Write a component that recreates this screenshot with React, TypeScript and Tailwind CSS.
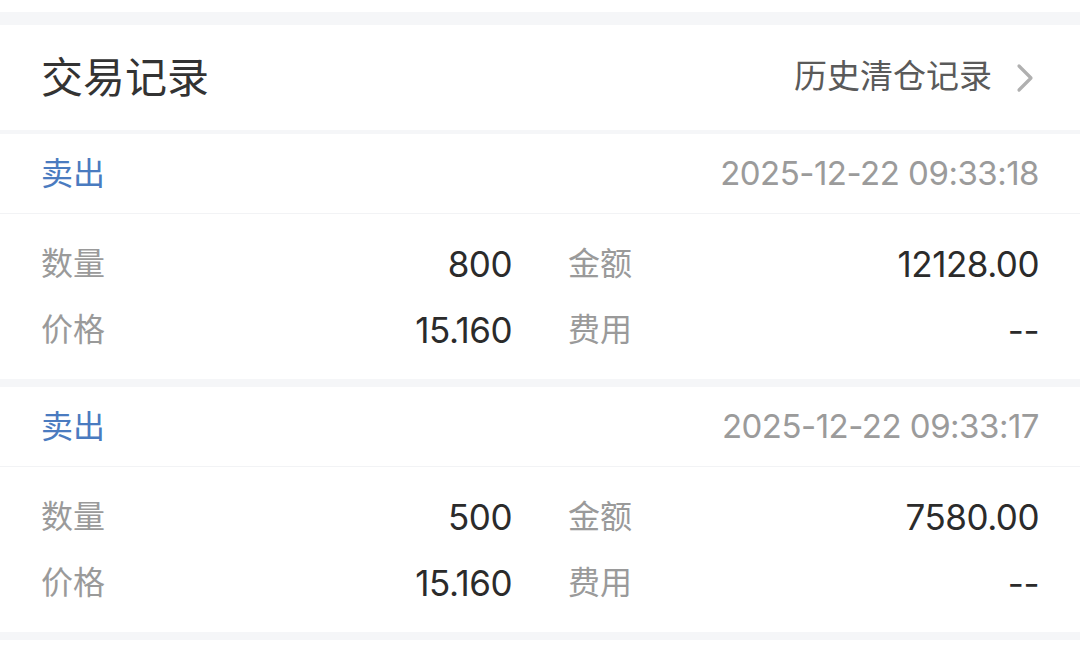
import React from "react";

const cjk = { fontFamily: '"Noto Sans CJK SC", "Noto Sans", sans-serif' };
const num = { fontFamily: 'Inter, "Noto Sans CJK SC", sans-serif' };

type Rec = { time: string; qty: string; amount: string; price: string; fee: string };

const records: Rec[] = [
  { time: "2025-12-22 09:33:18", qty: "800", amount: "12128.00", price: "15.160", fee: "--" },
  { time: "2025-12-22 09:33:17", qty: "500", amount: "7580.00", price: "15.160", fee: "--" },
];

function Cell({ label, value }: { label: string; value: string }) {
  return (
    <div className="flex h-[66px] items-center justify-between">
      <span className="pb-[6px] text-[32px] leading-none text-[#9a9a9a]" style={cjk}>
        {label}
      </span>
      <span className="text-[35px] leading-none text-[#2b2b2b] tracking-[-0.5px]" style={num}>
        {value}
      </span>
    </div>
  );
}

function Card({ r }: { r: Rec }) {
  return (
    <div className="bg-white">
      <div className="flex h-[80px] items-center justify-between border-b border-[#f2f3f5] px-[41px]">
        <span className="pb-[6px] text-[32px] leading-none text-[#4a7bc0]" style={cjk}>
          卖出
        </span>
        <span className="text-[33px] leading-none text-[#9b9b9b] tracking-[-0.5px]" style={num}>
          {r.time}
        </span>
      </div>
      <div className="grid grid-cols-2 gap-x-[56px] px-[41px] pt-[17px] pb-[16px]">
        <Cell label="数量" value={r.qty} />
        <Cell label="金额" value={r.amount} />
        <Cell label="价格" value={r.price} />
        <Cell label="费用" value={r.fee} />
      </div>
    </div>
  );
}

export default function App() {
  return (
    <div className="h-[648px] w-[1080px] overflow-hidden bg-white">
      <div className="h-[12px] bg-white" />
      <div className="h-[13px] bg-[#f5f6f8]" />
      <div className="flex h-[105px] items-center justify-between bg-white pl-[41px] pr-[46px]">
        <span className="pb-[6px] text-[42px] leading-none text-[#333333]" style={cjk}>
          交易记录
        </span>
        <div className="flex items-center gap-[24px]">
          <span className="pb-[6px] text-[33px] leading-none text-[#5a5a5a]" style={cjk}>
            历史清仓记录
          </span>
          <svg width="18" height="30" viewBox="0 0 18 30" fill="none">
            <polyline
              points="3,3 15,15 3,27"
              stroke="#b0b0b0"
              strokeWidth="3.2"
              strokeLinecap="round"
              strokeLinejoin="round"
            />
          </svg>
        </div>
      </div>
      <div className="h-[4px] bg-[#f5f6f8]" />
      <Card r={records[0]} />
      <div className="h-[8px] bg-[#f5f6f8]" />
      <Card r={records[1]} />
      <div className="h-[8px] bg-[#f5f6f8]" />
      <div className="h-[8px] bg-white" />
    </div>
  );
}
